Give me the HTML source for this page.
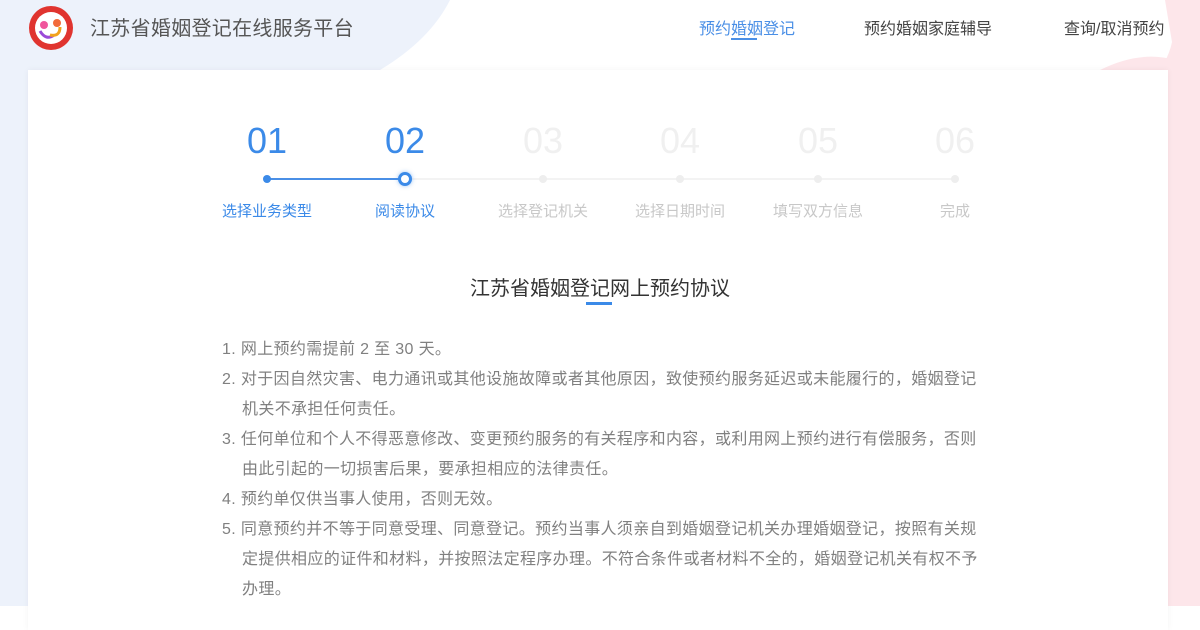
<!DOCTYPE html>
<html><head><meta charset="utf-8"><style>
*{margin:0;padding:0;box-sizing:border-box}
body{width:1200px;height:606px;overflow:hidden;position:relative;background:#fff;font-family:"Liberation Sans","Noto Sans CJK SC",sans-serif}
.bgl{position:absolute;left:0;top:0;width:1200px;height:606px}
.title{position:absolute;left:90px;top:12px;font-size:20px;color:#555;letter-spacing:0.3px}
.nav{position:absolute;top:15px;font-size:16px;color:#444}
.card{position:absolute;left:28px;top:70px;width:1140px;height:560px;background:#fff;box-shadow:0 0 6px rgba(0,0,0,0.05)}
.num{position:absolute;top:120px;width:100px;margin-left:-50px;text-align:center;font-size:36px;color:#f0f0f0}
.lab{position:absolute;top:200px;width:120px;margin-left:-60px;text-align:center;font-size:15px;color:#c8c8c8}
.on{color:#3b8ae8}
.dot{position:absolute;top:175px;width:8px;height:8px;margin-left:-4px;border-radius:50%;background:#eee}
.h2{position:absolute;left:0;width:1200px;text-align:center;top:272px;font-size:20px;color:#333}
.body{position:absolute;left:222px;top:335px;font-size:16px;line-height:30px;color:#808080;white-space:nowrap;letter-spacing:0.35px}
.body div{padding-left:20px;text-indent:-20px}
</style></head><body>
<svg class="bgl" viewBox="0 0 1200 606">
<path d="M0 0H450Q430 40 380 70H0Z" fill="#edf2fb"/>
<rect x="0" y="60" width="40" height="546" fill="#edf2fb"/>
<path d="M1160 0H1200V606H1160V70Q1180 40 1172 0Z" fill="#fde6ea"/>
<path d="M1100 70Q1140 50 1175 60L1165 0H1200V80H1100Z" fill="#fde6ea"/>
</svg>
<svg style="position:absolute;left:28px;top:5px" width="46" height="46" viewBox="0 0 46 46">
<circle cx="23" cy="23" r="22" fill="#e0342f"/>
<circle cx="23" cy="23" r="16" fill="#fff"/>
<circle cx="16" cy="20" r="4" fill="#f0569c"/>
<circle cx="29" cy="18" r="4" fill="#f26a3a"/>
<path d="M12 26q6 10 14 4" stroke="#9a4ad8" stroke-width="3" fill="none"/>
<path d="M22 30q10 2 10-8" stroke="#f2a21c" stroke-width="3" fill="none"/>
</svg>
<div class="title">江苏省婚姻登记在线服务平台</div>
<div class="nav" style="left:699px;color:#4a8fe6">预约婚姻登记</div>
<div style="position:absolute;left:731px;top:38px;width:26px;height:2px;background:#4a8fe6"></div>
<div class="nav" style="left:864px">预约婚姻家庭辅导</div>
<div class="nav" style="left:1064px">查询/取消预约</div>
<div class="card"></div>
<div style="position:absolute;left:267px;top:178px;width:688px;height:2px;background:#f3f3f3"></div>
<div style="position:absolute;left:267px;top:178px;width:138px;height:2px;background:#4a8fe6"></div>
<div class="num on" style="left:267px">01</div><div class="num on" style="left:405px">02</div>
<div class="num" style="left:543px">03</div><div class="num" style="left:680px">04</div>
<div class="num" style="left:818px">05</div><div class="num" style="left:955px">06</div>
<div class="dot" style="left:267px;background:#3b8ae8"></div>
<div style="position:absolute;left:398px;top:172px;width:14px;height:14px;border-radius:50%;border:3px solid #3b8ae8;background:#fff;box-shadow:0 0 4px rgba(59,138,232,.5)"></div>
<div class="dot" style="left:543px"></div><div class="dot" style="left:680px"></div>
<div class="dot" style="left:818px"></div><div class="dot" style="left:955px"></div>
<div class="lab on" style="left:267px">选择业务类型</div><div class="lab on" style="left:405px">阅读协议</div>
<div class="lab" style="left:543px">选择登记机关</div><div class="lab" style="left:680px">选择日期时间</div>
<div class="lab" style="left:818px">填写双方信息</div><div class="lab" style="left:955px">完成</div>
<div class="h2">江苏省婚姻登记网上预约协议</div>
<div style="position:absolute;left:586px;top:302px;width:26px;height:3px;background:#3b8ae8"></div>
<div class="body">
<div>1. 网上预约需提前 2 至 30 天。</div>
<div>2. 对于因自然灾害、电力通讯或其他设施故障或者其他原因，致使预约服务延迟或未能履行的，婚姻登记<br>机关不承担任何责任。</div>
<div>3. 任何单位和个人不得恶意修改、变更预约服务的有关程序和内容，或利用网上预约进行有偿服务，否则<br>由此引起的一切损害后果，要承担相应的法律责任。</div>
<div>4. 预约单仅供当事人使用，否则无效。</div>
<div>5. 同意预约并不等于同意受理、同意登记。预约当事人须亲自到婚姻登记机关办理婚姻登记，按照有关规<br>定提供相应的证件和材料，并按照法定程序办理。不符合条件或者材料不全的，婚姻登记机关有权不予<br>办理。</div>
</div>
</body></html>
